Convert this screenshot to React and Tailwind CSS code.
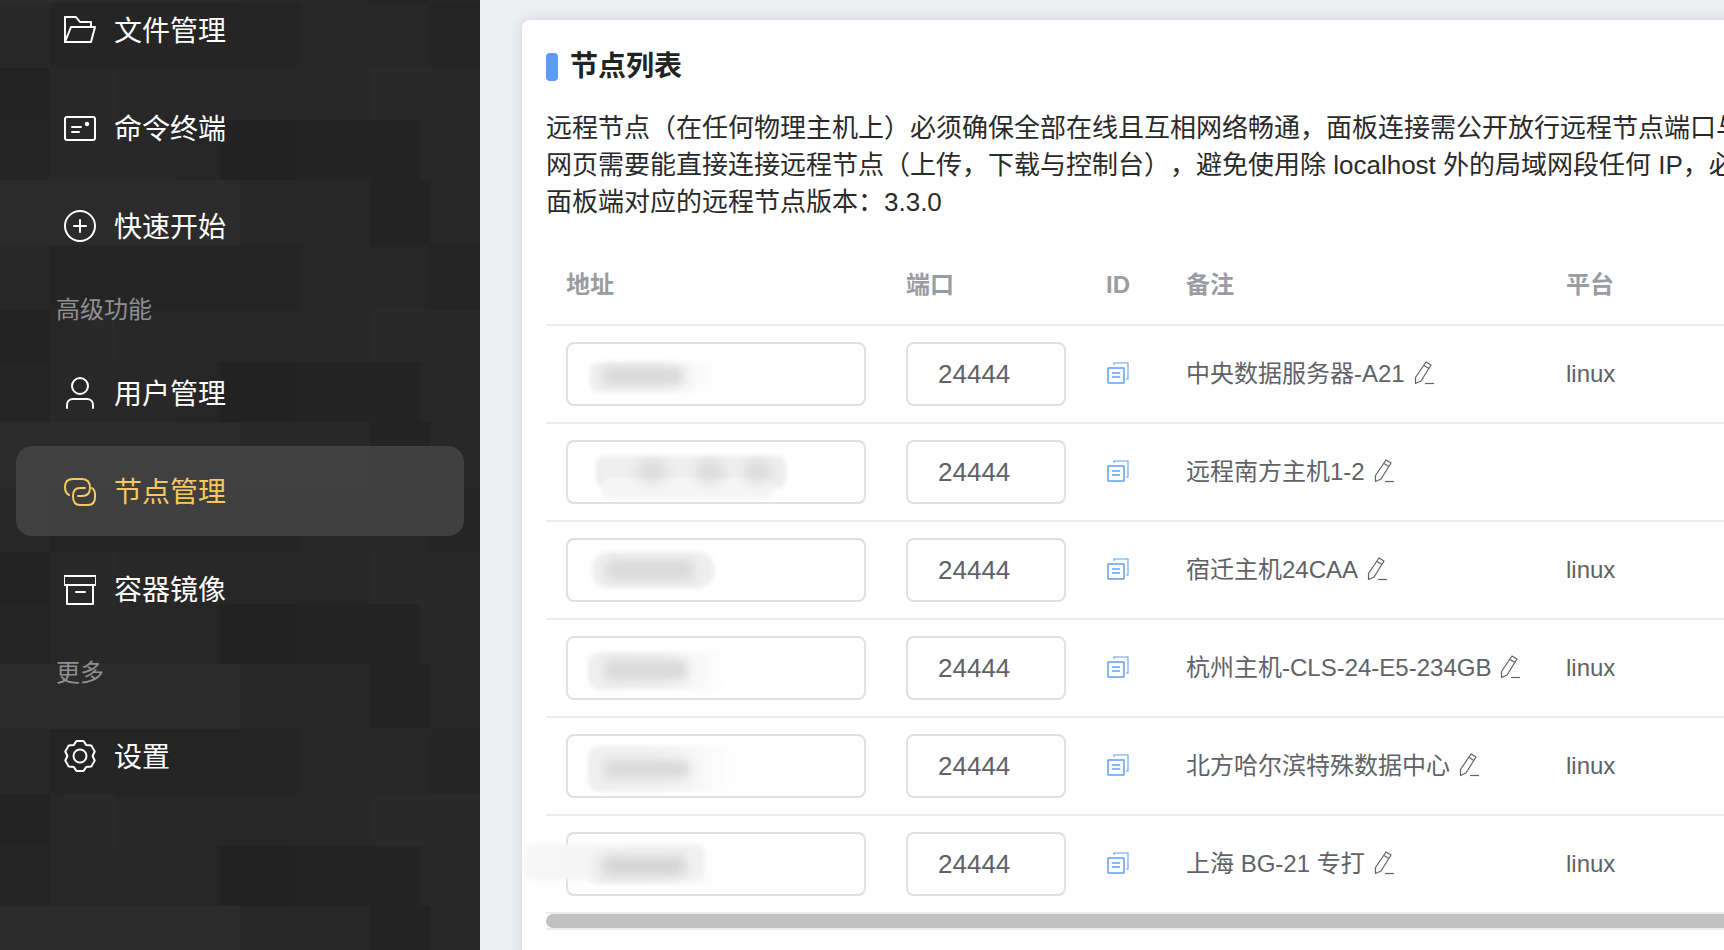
import React from "react";

const gearPath = (() => {
  // six rounded teeth around the centre of a 32 box
  const pts = [];
  for (let i = 0; i < 6; i++) {
    const a = (i * 60 - 90) * (Math.PI / 180);
    [[-30, 12.6], [-13, 15.4], [13, 15.4], [30, 12.6]].forEach(([d, r]) => {
      const t = a + (d * Math.PI) / 180;
      pts.push(`${(16 + r * Math.cos(t)).toFixed(1)} ${(16 + r * Math.sin(t)).toFixed(1)}`);
    });
  }
  return "M" + pts.join("L") + "Z";
})();

function Icon({ children }) {
  return (
    <svg width="32" height="32" viewBox="0 0 32 32" fill="none" stroke="currentColor" strokeWidth="2" strokeLinejoin="round" strokeLinecap="round" className="shrink-0">
      {children}
    </svg>
  );
}

const FolderIcon = () => (
  <Icon>
    <path d="M1 28V3H12L16 8H27V13" />
    <path d="M1 28L7 13H31L27 28Z" />
  </Icon>
);
const TerminalIcon = () => (
  <Icon>
    <rect x="1" y="5" width="30" height="23" rx="2" />
    <path d="M8 15H17M8 20H15" />
    <circle cx="23" cy="12" r="1.2" fill="currentColor" />
  </Icon>
);
const PlusIcon = () => (
  <Icon>
    <circle cx="16" cy="16" r="15" />
    <path d="M16 10V22M10 16H22" />
  </Icon>
);
const UserIcon = () => (
  <Icon>
    <circle cx="16" cy="9" r="8" />
    <path d="M3 31V28C3 24 6 22 9 22H23C26 22 29 24 29 28V31" />
  </Icon>
);
const NodeIcon = () => (
  <Icon>
    <path d="M5 20Q1 18 1 12Q1 4 9 4H18Q26 4 26 13Q26 21 18 21H14" />
    <path d="M28 13Q31 15 31 20V22Q31 30 24 30H16Q9 30 9 21Q9 13 16 13H21" />
  </Icon>
);
const BoxIcon = () => (
  <Icon>
    <path d="M0 3H32V12H0Z" />
    <path d="M3 12V31H29V12" />
    <path d="M12 19H21" />
  </Icon>
);
const GearIcon = () => (
  <Icon>
    <path d={gearPath} />
    <circle cx="16" cy="16" r="6.5" />
  </Icon>
);

function CopyIcon() {
  return (
    <svg width="24" height="24" viewBox="0 0 24 24" fill="none" stroke="#5f9ff8" strokeWidth="1.5" className="shrink-0 -mt-[2px]">
      <rect x="2" y="7" width="16" height="15" rx="0.5" />
      <path d="M6 12H14M6 16H14" />
      <path d="M8 4V2H22V18H20" strokeWidth="1.1" />
    </svg>
  );
}

function PencilIcon() {
  return (
    <svg width="22" height="24" viewBox="0 0 22 24" fill="none" stroke="#606266" strokeWidth="1.2" strokeLinejoin="round" className="shrink-0 -mt-[2px]">
      <path d="M13 1L18 4L8 20L2.5 22.5L2.5 16.5Z" />
      <path d="M11 4.5L16 7.5" />
      <path d="M12 22.5H21" />
    </svg>
  );
}

function NavItem({ icon, label, active }) {
  return (
    <div className={"flex h-[90px] mx-4 items-center gap-[18px] rounded-2xl pl-12 text-[28px] " + (active ? "bg-[#444444]/85 text-[#f5c95f]" : "text-white")}>
      {icon}
      <span className="pt-[3px]">{label}</span>
    </div>
  );
}

function NavLabel({ children }) {
  return <div className="flex h-[61px] items-center pl-14 text-2xl text-[#8f8f8f]">{children}</div>;
}

// the blurred out host addresses, one set of patches for each row
const rows = [
  {
    note: "中央数据服务器-A21",
    platform: "linux",
    blur: (
      <>
        <div className="absolute left-[22px] top-[18px] h-[30px] w-[130px] rounded-lg bg-gradient-to-r from-[#efefef] via-[#f0f0f0] to-transparent blur-[2px]" />
        <div className="absolute left-[34px] top-[23px] h-[18px] w-[82px] rounded-lg bg-[#d9d9d9] blur-[5px]" />
      </>
    ),
  },
  {
    note: "远程南方主机1-2",
    platform: "",
    blur: (
      <>
        <div className="absolute left-[28px] top-[14px] h-[32px] w-[190px] rounded-lg bg-[#eeeeee] blur-[2px]" />
        <div className="absolute left-[34px] top-[36px] h-[22px] w-[170px] rounded-lg bg-[#f5f5f5] blur-[2px]" />
        <div className="absolute left-[70px] top-[20px] h-[20px] w-[28px] rounded-full bg-[#dadada] blur-[6px]" />
        <div className="absolute left-[128px] top-[20px] h-[20px] w-[28px] rounded-full bg-[#dadada] blur-[6px]" />
        <div className="absolute left-[176px] top-[20px] h-[20px] w-[28px] rounded-full bg-[#dadada] blur-[6px]" />
      </>
    ),
  },
  {
    note: "宿迁主机24CAA",
    platform: "linux",
    blur: (
      <>
        <div className="absolute left-[24px] top-[12px] h-[36px] w-[122px] rounded-2xl bg-[#eeeeee] blur-[2px]" />
        <div className="absolute left-[38px] top-[20px] h-[20px] w-[88px] rounded-lg bg-[#d9d9d9] blur-[5px]" />
      </>
    ),
  },
  {
    note: "杭州主机-CLS-24-E5-234GB",
    platform: "linux",
    blur: (
      <>
        <div className="absolute left-[20px] top-[14px] h-[38px] w-[140px] rounded-xl bg-gradient-to-r from-[#efefef] via-[#f0f0f0] to-transparent blur-[2px]" />
        <div className="absolute left-[36px] top-[22px] h-[20px] w-[84px] rounded-lg bg-[#d9d9d9] blur-[5px]" />
      </>
    ),
  },
  {
    note: "北方哈尔滨特殊数据中心",
    platform: "linux",
    blur: (
      <>
        <div className="absolute left-[20px] top-[10px] h-[46px] w-[150px] rounded-xl bg-gradient-to-r from-[#efefef] via-[#f1f1f1] to-transparent blur-[2px]" />
        <div className="absolute left-[36px] top-[24px] h-[18px] w-[86px] rounded-lg bg-[#d9d9d9] blur-[5px]" />
      </>
    ),
  },
  {
    note: "上海 BG-21 专打",
    platform: "linux",
    blur: (
      <>
        <div className="absolute left-[-44px] top-[10px] h-[36px] w-[180px] rounded-lg bg-gradient-to-r from-[#f7f7f7] to-[#f1f1f1] blur-[2px]" />
        <div className="absolute left-[22px] top-[18px] h-[32px] w-[130px] rounded-lg bg-gradient-to-r from-[#efefef] via-[#f0f0f0] to-transparent blur-[2px]" />
        <div className="absolute left-[34px] top-[22px] h-[20px] w-[84px] rounded-lg bg-[#d6d6d6] blur-[5px]" />
      </>
    ),
  },
];

function Row({ row }) {
  return (
    <div className="grid h-[98px] grid-cols-[340px_200px_80px_380px_1fr] items-center border-b-2 border-[#ebecf2] text-2xl text-[#606266]">
      <div className="pl-5">
        <div className="relative h-16 w-[300px] rounded-lg border-2 border-[#dfe0e6] bg-white">{row.blur}</div>
      </div>
      <div className="pl-5">
        <div className="flex h-16 w-[160px] items-center rounded-lg border-2 border-[#dfe0e6] pl-[30px] text-[26px]">24444</div>
      </div>
      <div className="pl-5">
        <CopyIcon />
      </div>
      <div className="flex items-center gap-2 pl-5">
        <span className="whitespace-nowrap">{row.note}</span>
        <PencilIcon />
      </div>
      <div className="pl-5">{row.platform}</div>
    </div>
  );
}

export default function App() {
  return (
    <div className="flex h-screen overflow-hidden bg-[#eeeff3] font-['Liberation_Sans','Noto_Sans_CJK_SC',sans-serif]">
      {/* Sidebar */}
      <aside className="relative w-[480px] shrink-0 overflow-hidden bg-[#272727]">
        <svg className="absolute inset-0 h-full w-full" aria-hidden="true">
          <defs>
            <pattern id="mosaic" width="480" height="242" patternUnits="userSpaceOnUse" y="3">
              <rect x="0" y="0" width="50" height="65" fill="#282828" />
              <rect x="50" y="0" width="250" height="65" fill="#252525" />
              <rect x="300" y="0" width="130" height="65" fill="#272727" />
              <rect x="430" y="0" width="50" height="65" fill="#252525" />
              <rect x="0" y="65" width="50" height="52" fill="#232323" />
              <rect x="65" y="65" width="50" height="52" fill="#292929" />
              <rect x="115" y="65" width="255" height="52" fill="#272727" />
              <rect x="370" y="65" width="110" height="52" fill="#292929" />
              <rect x="0" y="117" width="50" height="60" fill="#252525" />
              <rect x="50" y="117" width="125" height="60" fill="#282828" />
              <rect x="175" y="117" width="45" height="60" fill="#262626" />
              <rect x="220" y="117" width="75" height="60" fill="#222222" />
              <rect x="295" y="117" width="125" height="60" fill="#242424" />
              <rect x="420" y="117" width="60" height="60" fill="#282828" />
              <rect x="0" y="177" width="240" height="65" fill="#2b2b2b" />
              <rect x="240" y="177" width="130" height="65" fill="#282828" />
              <rect x="370" y="177" width="60" height="65" fill="#242424" />
              <rect x="430" y="177" width="50" height="65" fill="#272727" />
            </pattern>
          </defs>
          <rect width="100%" height="100%" fill="url(#mosaic)" />
        </svg>
        <nav className="relative -mt-[15px] flex flex-col gap-2">
          <NavItem icon={<FolderIcon />} label="文件管理" />
          <NavItem icon={<TerminalIcon />} label="命令终端" />
          <NavItem icon={<PlusIcon />} label="快速开始" />
          <NavLabel>高级功能</NavLabel>
          <NavItem icon={<UserIcon />} label="用户管理" />
          <NavItem icon={<NodeIcon />} label="节点管理" active />
          <NavItem icon={<BoxIcon />} label="容器镜像" />
          <NavLabel>更多</NavLabel>
          <NavItem icon={<GearIcon />} label="设置" />
        </nav>
      </aside>

      {/* Content */}
      <main className="min-w-0 flex-1 overflow-hidden pl-[42px] pt-5">
        <div className="h-[960px] w-[1400px] rounded-lg bg-white px-6 pt-[26px] shadow-[0_0_14px_rgba(0,0,0,0.12)]">
          <h2 className="flex h-[42px] items-center gap-3 text-[28px] font-bold text-[#222]">
            <span className="h-7 w-3 rounded bg-[#5b9cf8]" />
            节点列表
          </h2>
          <div className="mt-[22px] whitespace-nowrap text-[26px] leading-[37px] text-[#2a2a2a] [text-spacing-trim:space-all]">
            <p>远程节点（在任何物理主机上）必须确保全部在线且互相网络畅通，面板连接需公开放行远程节点端口与</p>
            <p>网页需要能直接连接远程节点（上传，下载与控制台），避免使用除 localhost 外的局域网段任何 IP，必</p>
            <p>面板端对应的远程节点版本：3.3.0</p>
          </div>

          <div className="mt-[27px]">
            <div className="grid h-[78px] grid-cols-[340px_200px_80px_380px_1fr] items-center border-b-2 border-[#ebecf2] pb-[2px] text-2xl font-bold text-[#9a9ca3]">
              <div className="pl-5">地址</div>
              <div className="pl-5">端口</div>
              <div className="pl-5">ID</div>
              <div className="pl-5">备注</div>
              <div className="pl-5">平台</div>
            </div>
            {rows.map((row) => (
              <Row key={row.note} row={row} />
            ))}
            <div className="border-b-2 border-[#ebecf2]">
              <div className="h-[14px] rounded-l-lg bg-[#c1c1c1]" />
            </div>
          </div>
        </div>
      </main>
    </div>
  );
}
